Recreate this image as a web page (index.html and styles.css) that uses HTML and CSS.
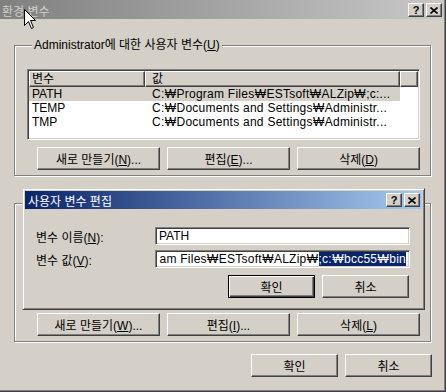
FILE: index.html
```html
<!DOCTYPE html>
<html lang="ko">
<head>
  <meta charset="UTF-8" />
  <title>환경 변수</title>
  <link rel="stylesheet" href="styles.css">
</head>
<body>
  <div class="window">
    <div class="titlebar">
      <span class="title">환경 변수</span>
      <div class="caption-btns">
        <span class="cbtn">?</span>
        <span class="cbtn"><svg width="8" height="7" viewBox="0 0 8 7"><path d="M0.5 0.5 L7.5 6.5 M7.5 0.5 L0.5 6.5" stroke="#000" stroke-width="1.6"/></svg></span>
      </div>
    </div>

    <div class="content">
      <fieldset class="group">
        <legend>Administrator에 대한 사용자 변수(<u>U</u>)</legend>
        <div class="listview">
          <div class="lv-head">
            <span class="col1">변수</span>
            <span class="col2">값</span>
            <span class="col3"></span>
          </div>
          <div class="lv-row selected"><span class="col1">PATH</span><span class="col2">C:<span class="won">₩</span>Program Files<span class="won">₩</span>ESTsoft<span class="won">₩</span>ALZip<span class="won">₩</span>;c:...</span></div>
          <div class="lv-row"><span class="col1">TEMP</span><span class="col2">C:<span class="won">₩</span>Documents and Settings<span class="won">₩</span>Administr...</span></div>
          <div class="lv-row"><span class="col1">TMP</span><span class="col2">C:<span class="won">₩</span>Documents and Settings<span class="won">₩</span>Administr...</span></div>
        </div>
        <div class="btn-row">
          <button class="btn">새로 만들기(<u>N</u>)...</button>
          <button class="btn">편집(<u>E</u>)...</button>
          <button class="btn">삭제(<u>D</u>)</button>
        </div>
      </fieldset>

      <fieldset class="group group-sys">
        <div class="listview lv-sys"></div>
        <div class="btn-row">
          <button class="btn">새로 만들기(<u>W</u>)...</button>
          <button class="btn">편집(<u>I</u>)...</button>
          <button class="btn">삭제(<u>L</u>)</button>
        </div>
      </fieldset>

      <div class="footer">
        <button class="btn btn-wide">확인</button>
        <button class="btn btn-wide">취소</button>
      </div>
    </div>

    <div class="dialog">
      <div class="dlg-title">
        <span>사용자 변수 편집</span>
        <div class="caption-btns">
          <span class="cbtn">?</span>
          <span class="cbtn"><svg width="8" height="7" viewBox="0 0 8 7"><path d="M0.5 0.5 L7.5 6.5 M7.5 0.5 L0.5 6.5" stroke="#000" stroke-width="1.6"/></svg></span>
        </div>
      </div>
      <div class="dlg-body">
        <div class="field">
          <label>변수 이름(<u>N</u>):</label>
          <div class="tb">PATH</div>
        </div>
        <div class="field">
          <label>변수 값(<u>V</u>):</label>
          <div class="tb tb-end">am Files<span class="won">₩</span>ESTsoft<span class="won">₩</span>ALZip<span class="won">₩</span><span class="sel">;c:<span class="won">₩</span>bcc55<span class="won">₩</span>bin</span></div>
        </div>
        <div class="dlg-btns">
          <button class="btn btn-wide default">확인</button>
          <button class="btn btn-wide">취소</button>
        </div>
      </div>
    </div>

    <svg class="cursor" width="13" height="21" viewBox="0 0 13 21">
      <polygon points="0.5,0.5 0.5,16.5 4.5,12.5 7.5,19.5 9.5,18.5 6.5,11.5 11.5,11.5" fill="#fff" stroke="#000" stroke-width="1"/>
    </svg>
  </div>
</body>
</html>
```

FILE: styles.css
```css
* {
  box-sizing: border-box;
}
body {
  margin: 0;
  background: #d4d0c8;
  font-family: "Liberation Sans", "Noto Sans CJK KR", sans-serif;
  font-size: 12px;
  color: #000;
  overflow: hidden;
}

.window {
  position: relative;
  width: 446px;
  height: 392px;
  background: #d4d0c8;
  border-right: 1px solid #404040;
  border-bottom: 1px solid #404040;
  box-shadow: inset -1px -1px 0 #808080;
  padding-right: 1px;
  padding-bottom: 1px;
  display: flex;
  flex-direction: column;
}

/* caption bars */
.titlebar {
  height: 19px;
  display: flex;
  justify-content: space-between;
  align-items: center;
  padding: 1px 2px 0 2px;
  background: linear-gradient(to right, #808080, #c8c8c8);
  color: #d4d0c8;
}
.caption-btns {
  display: flex;
  gap: 2px;
}
.cbtn {
  width: 16px;
  height: 14px;
  display: flex;
  align-items: center;
  justify-content: center;
  background: #d4d0c8;
  border: 1px solid;
  border-color: #fff #404040 #404040 #fff;
  box-shadow: inset -1px -1px 0 #808080;
  color: #000;
  font-weight: bold;
  font-size: 11px;
  line-height: 1;
}

.content {
  flex: 1;
  padding: 0 13px 0 14px;
}

/* group boxes */
.group {
  margin: 19px 0 0 0;
  padding: 16px 10px 5px 12px;
  border: 1px solid #808080;
  box-shadow: 1px 1px 0 #fff, inset 1px 1px 0 #fff;
  min-width: 0;
}
.group legend {
  padding: 0 2px;
  margin-left: 5px;
  line-height: 15px;
  background: #d4d0c8;
}
.group-sys {
  margin-top: 27px;
  padding-top: 23px;
}

.listview {
  height: 71px;
  background: #fff;
  border: 1px solid;
  border-color: #808080 #fff #fff #808080;
  box-shadow: inset 1px 1px 0 #404040, inset -1px -1px 0 #d4d0c8;
  padding: 1px;
  overflow: hidden;
}
.lv-sys {
  height: 79px;
}
.lv-head {
  display: flex;
  height: 16px;
}
.lv-head span {
  height: 16px;
  line-height: 14px;
  background: #d4d0c8;
  border: 1px solid;
  border-color: #fff #404040 #404040 #fff;
  box-shadow: inset -1px -1px 0 #808080;
  padding-left: 2px;
}
.lv-head .col1 {
  width: 116px;
}
.lv-head .col2 {
  width: 255px;
  padding-left: 6px;
}
.lv-head .col3 {
  flex: 1;
}
.lv-row {
  display: flex;
  width: 371px;
  height: 14px;
  line-height: 14px;
  white-space: nowrap;
}
.lv-row.selected {
  background: #d4d0c8;
}
.lv-row .col1 {
  width: 116px;
  padding-left: 3px;
}
.lv-row .col2 {
  padding-left: 7px;
  letter-spacing: 0.25px;
}

/* the won sign (backslash) is drawn wide in the Korean system font */
.won {
  display: inline-block;
  width: 12px;
  text-align: center;
}

.btn-row {
  display: flex;
  gap: 7px;
  margin-top: 7px;
  padding-left: 10px;
}
.btn-row .btn {
  flex: 1;
}

.btn {
  font: inherit;
  height: 23px;
  padding: 0;
  color: #000;
  background: #d4d0c8;
  border: 1px solid;
  border-color: #fff #404040 #404040 #fff;
  box-shadow: inset -1px -1px 0 #808080;
}
.btn-wide {
  width: 87px;
}
.btn.default {
  border-color: #000;
  box-shadow: inset 1px 1px 0 #fff, inset -1px -1px 0 #404040, inset -2px -2px 0 #808080;
}

.footer {
  display: flex;
  justify-content: flex-end;
  gap: 7px;
  margin: 12px -1px 0 0;
}

/* edit dialog on top */
.dialog {
  position: absolute;
  left: 22px;
  top: 188px;
  width: 403px;
  height: 122px;
  background: #d4d0c8;
  border: 1px solid;
  border-color: #d4d0c8 #404040 #404040 #d4d0c8;
  box-shadow: inset 1px 1px 0 #fff, inset -1px -1px 0 #808080;
  padding: 2px;
}
.dlg-title {
  height: 18px;
  display: flex;
  justify-content: space-between;
  align-items: center;
  padding: 0 2px 0 3px;
  background: linear-gradient(to right, #0a246a, #a6caf0);
  color: #fff;
}
.dlg-body {
  padding: 18px 12px 0 11px;
}
.field {
  display: grid;
  grid-template-columns: 119px 255px;
  align-items: center;
  margin-bottom: 5px;
}
.tb {
  height: 18px;
  background: #fff;
  border: 1px solid;
  border-color: #808080 #fff #fff #808080;
  box-shadow: inset 1px 1px 0 #404040, inset -1px -1px 0 #d4d0c8;
  padding: 0 3px;
  display: flex;
  align-items: center;
  white-space: nowrap;
  overflow: hidden;
}
.tb-end {
  justify-content: flex-end;
  letter-spacing: 0.25px;
}
.sel {
  background: #0a246a;
  color: #fff;
}
.dlg-btns {
  display: flex;
  justify-content: flex-end;
  gap: 7px;
  margin-top: 7px;
  padding-right: 1px;
}

.cursor {
  position: absolute;
  left: 24px;
  top: 9px;
}
```
